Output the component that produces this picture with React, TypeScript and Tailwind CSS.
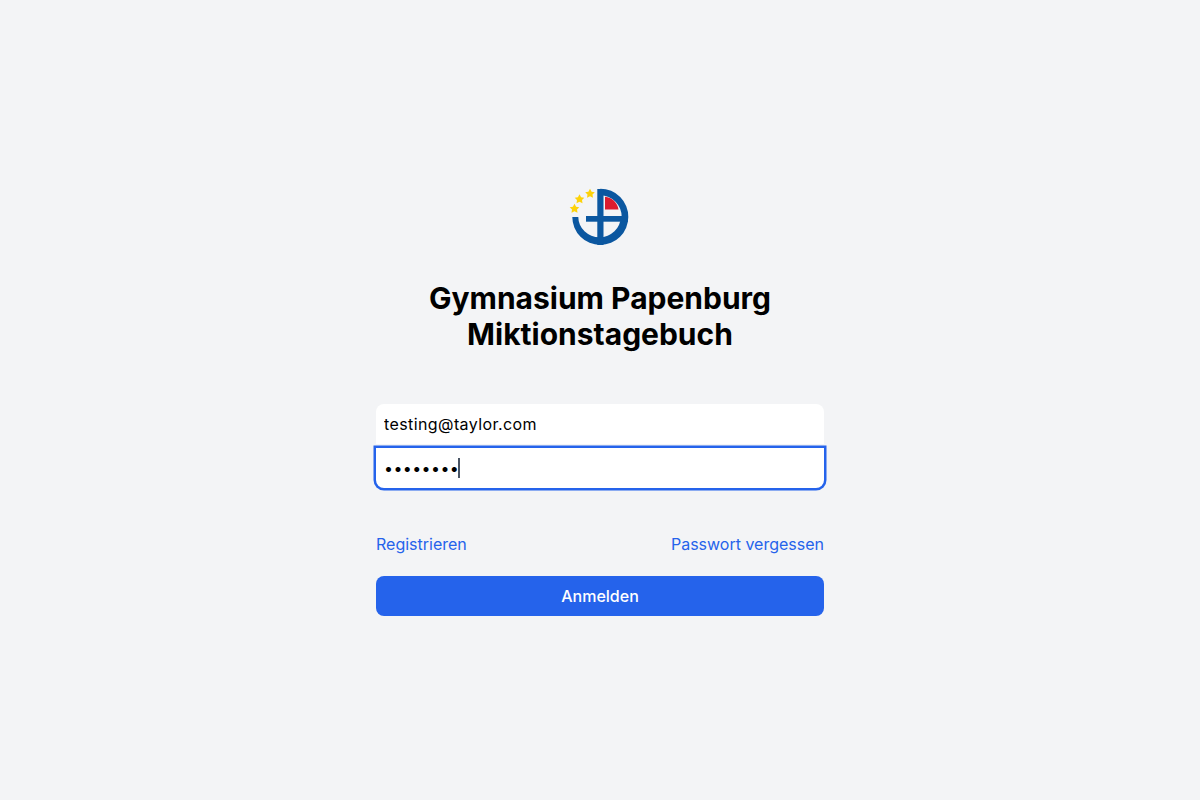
const Logo = () => {
    return (
        <svg viewBox="0 0 64 64" className="h-16 w-16">
            <g fill="#0b57a0">
                <path d="M32.3 4.7A28 28 0 0 1 60.3 33H53.7A21.5 21.5 0 0 0 32.3 11.3Z" />
                <path d="M4.3 33A28 28 0 0 0 60.3 33H52.7A21.2 20.3 0 0 1 10.3 33Z" />
                <rect x="29.3" y="5" width="6.2" height="56" />
                <rect x="18" y="32" width="42" height="5.7" />
            </g>
            <path d="M37 12.7C44 13.5 49.5 18.5 50.5 25.5H37Z" fill="#dc1c2e" />
            <g fill="#fdd20a">
                <path d="M22 4.8L23.6 7.7L26.8 8.2L24.5 10.5L25 13.8L22 12.3L19 13.8L19.5 10.5L17.2 8.2L20.4 7.7Z" />
                <path d="M11.5 10.3L13.1 13.2L16.3 13.7L14 16L14.5 19.3L11.5 17.8L8.5 19.3L9 16L6.7 13.7L9.9 13.2Z" />
                <path d="M6.5 19.8L8.1 22.7L11.3 23.2L9 25.5L9.5 28.8L6.5 27.3L3.5 28.8L4 25.5L1.7 23.2L4.9 22.7Z" />
            </g>
        </svg>
    )
}

const App = () => {
    return (
        <div className="flex min-h-screen flex-col items-center justify-center bg-gray-100 font-['Inter',sans-serif]">
            <div className="w-[448px]">
                <div className="flex justify-center">
                    <Logo />
                </div>
                <h1 className="mt-8 text-center text-3xl font-bold text-black">
                    Gymnasium Papenburg<br />Miktionstagebuch
                </h1>
                <div className="mt-[52px]">
                    <input
                        type="email"
                        defaultValue="testing@taylor.com"
                        className="block h-10 w-full rounded-t-lg bg-white px-2 text-base tracking-[0.4px] text-black outline-none"
                    />
                    <div className="relative mt-1 h-10">
                        <input
                            type="password"
                            defaultValue="testing1"
                            className="block h-10 w-full rounded-b-lg bg-white px-2 text-base tracking-[0.4px] text-black outline-none ring-[2.5px] ring-[#2563eb]"
                        />
                        <div className="absolute left-[82px] top-[10px] h-5 w-[1.5px] bg-gray-600"></div>
                    </div>
                </div>
                <div className="mt-11 flex items-center justify-between text-base text-[#2563eb]">
                    <a href="#">Registrieren</a>
                    <a href="#">Passwort vergessen</a>
                </div>
                <button className="mt-5 flex h-10 w-full items-center justify-center rounded-lg bg-[#2563eb] text-base font-medium text-white">
                    Anmelden
                </button>
            </div>
        </div>
    )
}

export default App;
